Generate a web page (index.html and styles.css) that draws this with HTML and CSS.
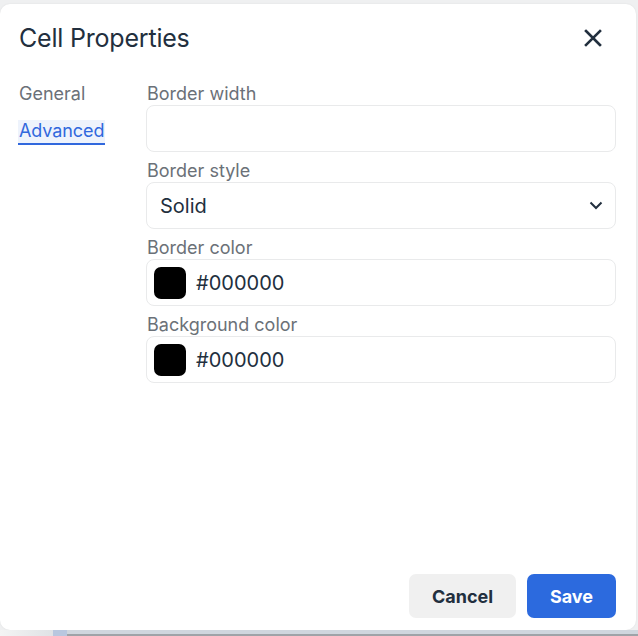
FILE: index.html
```html
<!DOCTYPE html>
<html>
<head>
<meta charset="utf-8">
<link rel="stylesheet" href="styles.css">
</head>
<body>
<div class="dialog">
  <div class="dlg-header">
    <div class="dlg-title">Cell Properties</div>
    <button class="close-btn" aria-label="Close">
      <svg width="18" height="18" viewBox="0 0 18 18"><path d="M2 2 L16 16 M16 2 L2 16" stroke="#222f3e" stroke-width="2.6" stroke-linecap="square"/></svg>
    </button>
  </div>
  <div class="dlg-body">
    <nav class="tabs">
      <div class="tab">General</div>
      <div class="tab active">Advanced</div>
    </nav>
    <div class="form">
      <div class="field">
        <label class="label">Border width</label>
        <div class="input"></div>
      </div>
      <div class="field">
        <label class="label">Border style</label>
        <div class="input select"><span>Solid</span>
          <svg width="14" height="9" viewBox="0 0 14 9"><path d="M1.5 1.5 L7 7 L12.5 1.5" fill="none" stroke="#222f3e" stroke-width="2"/></svg>
        </div>
      </div>
      <div class="field">
        <label class="label">Border color</label>
        <div class="input color"><span class="swatch"></span><span>#000000</span></div>
      </div>
      <div class="field">
        <label class="label">Background color</label>
        <div class="input color"><span class="swatch"></span><span>#000000</span></div>
      </div>
    </div>
  </div>
  <div class="dlg-footer">
    <button class="btn secondary">Cancel</button>
    <button class="btn primary">Save</button>
  </div>
</div>
<div class="page-strip"><span class="strip-a"></span><span class="strip-b"></span><span class="strip-c"></span></div>
</body>
</html>
```
FILE: styles.css
```css
* { box-sizing: border-box; }
html, body { margin: 0; padding: 0; }
body {
  background: #eff0f1;
  font-family: Inter, "Noto Sans", sans-serif;
  color: #222f3e;
  padding-top: 4px;
  width: 638px;
  height: 636px;
  overflow: hidden;
}
.dialog {
  width: 636px;
  height: 626px;
  background: #fff;
  border-radius: 10px;
  display: flex;
  flex-direction: column;
  box-shadow: 0 0 2px rgba(0,0,0,0.08);
}
.dlg-header {
  display: flex;
  justify-content: space-between;
  align-items: flex-start;
  padding: 18px 34px 0 19px;
  height: 68px;
}
.dlg-title {
  font-size: 25px;
  line-height: 32px;
  font-weight: 400;
  letter-spacing: -0.2px;
}
.close-btn {
  border: 0;
  background: none;
  padding: 0;
  margin-top: 7px;
  width: 18px;
  height: 18px;
  display: block;
}
.close-btn svg { display: block; }
.dlg-body {
  display: flex;
  flex: 1;
  padding: 11px 20px 0 19px;
}
.tabs {
  width: 127px;
  flex: none;
  display: flex;
  flex-direction: column;
  gap: 15px;
}
.tab {
  font-size: 18px;
  line-height: 22px;
  color: #6b7178;
  align-self: flex-start;
}
.tab.active {
  color: #3168dd;
  background: #eef3fc;
  border-bottom: 2px solid #3168dd;
  margin-left: -1px;
  padding: 0 1px 1px;
  letter-spacing: -0.1px;
}
.form {
  flex: 1;
  display: flex;
  flex-direction: column;
  gap: 8px;
}
.label {
  display: block;
  font-size: 18px;
  line-height: 22px;
  color: #6b7178;
  padding-left: 1px;
}
.input {
  height: 47px;
  border: 1px solid #e9eaeb;
  border-radius: 8px;
  background: #fff;
  display: flex;
  align-items: center;
  font-size: 20px;
  color: #222f3e;
}
.select {
  justify-content: space-between;
  padding: 0 12px 0 13px;
}
.select svg { display: block; }
.color {
  padding-left: 7px;
  gap: 10px;
}
.swatch {
  width: 32px;
  height: 32px;
  background: #000;
  border-radius: 7px;
  flex: none;
}
.dlg-footer {
  display: flex;
  justify-content: flex-end;
  gap: 11px;
  padding: 0 20px 12px 0;
}
.btn {
  height: 44px;
  border: 0;
  border-radius: 7px;
  font-family: Inter, "Noto Sans", sans-serif;
  font-size: 18px;
  font-weight: 700;
  padding: 0 22px;
}
.btn.secondary {
  background: #f0f0f0;
  color: #222f3e;
  width: 107px;
}
.btn.primary {
  background: #2c6ade;
  color: #fff;
  width: 89px;
}
.page-strip {
  display: flex;
  height: 6px;
  background: #cfd6de;
}
.strip-a { width: 53px; background: linear-gradient(90deg, #f4f4f4, #dfe2e5); }
.strip-b { width: 14px; background: #b8c7df; }
.strip-c { flex: 1; border-bottom: 2px solid #9ea3a8; }
```
